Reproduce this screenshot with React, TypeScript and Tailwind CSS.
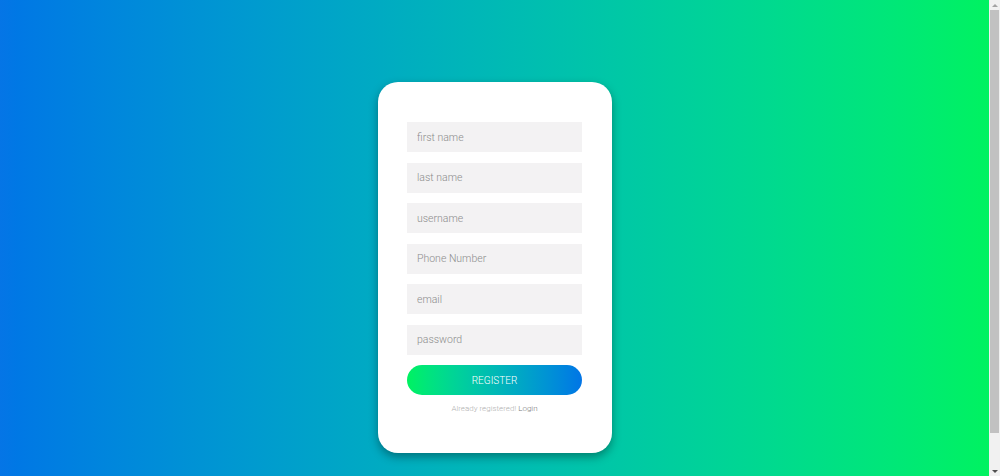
export default function App() {
  const fields = ["first name", "last name", "username", "Phone Number", "email", "password"];

  return (
    <div className="h-screen w-full flex overflow-hidden font-['Roboto',sans-serif]">
      {/* page */}
      <main className="flex-1 h-[513px] bg-gradient-to-r from-[#0575e6] to-[#00f260] flex justify-center pt-[82px]">
        <form className="w-[234px] h-[371px] bg-white rounded-[20px] shadow-[0_4px_10px_rgba(0,0,0,0.35)] flex flex-col items-center pt-[40px]">
          <div className="flex flex-col gap-[10.5px] w-[175px]">
            {fields.map((f) => (
              <input
                key={f}
                type={f === "password" ? "password" : "text"}
                placeholder={f}
                className="w-full h-[30px] bg-[#f3f2f3] px-[10px] text-[10.5px] font-light text-[#555] placeholder:text-[#8c8c8c] outline-none"
              />
            ))}
            <button
              type="button"
              className="h-[30px] w-full rounded-full bg-gradient-to-r from-[#00f260] to-[#0575e6] text-white text-[10px] font-light"
            >
              REGISTER
            </button>
          </div>
          <p className="mt-[8px] text-[8px] font-light text-[#b0b0b0]">
            Already registered! <a className="text-[#7a7a7a]">Login</a>
          </p>
        </form>
      </main>

      {/* scrollbar */}
      <aside className="w-[11px] h-full bg-[#f1f1f1] flex flex-col items-center">
        <div className="h-[10px] flex items-center justify-center">
          <div className="w-0 h-0 border-x-[3px] border-x-transparent border-b-[3px] border-b-[#a3a3a3]" />
        </div>
        <div className="w-[9px] h-[423px] bg-[#c1c1c1]" />
        <div className="flex-1 flex items-end justify-center pb-[3px]">
          <div className="w-0 h-0 border-x-[3px] border-x-transparent border-t-[3px] border-t-[#505050]" />
        </div>
      </aside>
    </div>
  );
}
